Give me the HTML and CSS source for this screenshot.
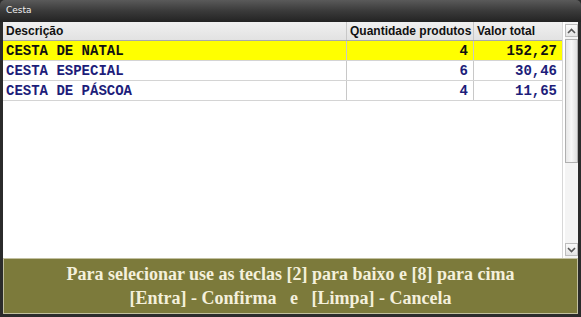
FILE: index.html
```html
<!DOCTYPE html>
<html>
<head>
<meta charset="utf-8">
<link rel="stylesheet" href="styles.css">
</head>
<body>
<div class="window">
  <div class="titlebar">Cesta</div>
  <div class="content">
    <div class="grid">
      <div class="row head">
        <div class="c desc">Descrição</div>
        <div class="c qty">Quantidade produtos</div>
        <div class="c val">Valor total</div>
      </div>
      <div class="row data sel">
        <div class="c desc">CESTA DE NATAL</div>
        <div class="c qty num">4</div>
        <div class="c val num">152,27</div>
      </div>
      <div class="row data">
        <div class="c desc">CESTA ESPECIAL</div>
        <div class="c qty num">6</div>
        <div class="c val num">30,46</div>
      </div>
      <div class="row data">
        <div class="c desc">CESTA DE PÁSCOA</div>
        <div class="c qty num">4</div>
        <div class="c val num">11,65</div>
      </div>
    </div>
    <div class="scrollbar">
      <div class="sbtn up"><svg width="9" height="6" viewBox="0 0 9 6"><path d="M1 5 L4.5 1.5 L8 5" fill="none" stroke="#555" stroke-width="1.6"/></svg></div>
      <div class="thumb"></div>
      <div class="track"></div>
      <div class="sbtn down"><svg width="9" height="6" viewBox="0 0 9 6"><path d="M1 1 L4.5 4.5 L8 1" fill="none" stroke="#555" stroke-width="1.6"/></svg></div>
    </div>
  </div>
  <div class="footer">
    <div>Para selecionar use as teclas [2] para baixo e [8] para cima</div>
    <div>[Entra] - Confirma &nbsp; e &nbsp; [Limpa] - Cancela</div>
  </div>
</div>
</body>
</html>
```

FILE: styles.css
```css
html, body {
  margin: 0;
  padding: 0;
  background: #2a2a2a;
}
.window {
  width: 581px;
  height: 317px;
  display: flex;
  flex-direction: column;
  background: #2b2b2b;
  border-radius: 5px 5px 0 0;
  overflow: hidden;
}
.titlebar {
  height: 22px;
  box-sizing: border-box;
  padding: 5px 0 0 6px;
  background: linear-gradient(#5a5a5a, #3a3a3a 50%, #232323);
  color: #f0f0f0;
  font: 9px "DejaVu Sans", sans-serif;
}
.content {
  display: flex;
  height: 236px;
  margin: 0 3px 0 3px;
  background: #fff;
}
.grid {
  flex: 1;
  border-right: 1px solid #d8d8d8;
}
.row {
  display: flex;
  height: 20px;
  box-sizing: border-box;
  border-bottom: 1px solid #d4d4d4;
}
.row.head {
  height: 19px;
  background: linear-gradient(#f0f0f0, #e2e2e2);
  border-bottom: 1px solid #a8a8a8;
  font: bold 12px "Liberation Sans", Arial, sans-serif;
  color: #111;
}
.c {
  box-sizing: border-box;
  padding: 0 3px;
  display: flex;
  align-items: center;
  white-space: nowrap;
}
.desc { width: 344px; border-right: 1px solid #c8c8c8; }
.qty { width: 127px; border-right: 1px solid #c8c8c8; }
.val { width: 88px; }
.head .c { padding: 0 2px 0 3px; }
.num { justify-content: flex-end; }
.data {
  font: bold 14px "Liberation Mono", "Courier New", monospace;
  color: #1d1d7a;
}
.data .c { padding: 0 3px 0 3px; }
.data .num { padding-right: 5px; }
.sel {
  background: #ffff00;
  color: #111;
}
.scrollbar {
  width: 14px;
  margin-left: 2px;
  display: flex;
  flex-direction: column;
  background: #f4f4f4;
  padding: 2px 0;
  box-sizing: border-box;
}
.sbtn {
  height: 13px;
  display: flex;
  align-items: center;
  justify-content: center;
  border: 1px solid #bdbdbd;
  background: linear-gradient(#fafafa, #e4e4e4);
  box-sizing: border-box;
}
.thumb {
  height: 124px;
  margin-top: 2px;
  border: 1px solid #b0b0b0;
  background: linear-gradient(90deg, #e8e8e8, #f8f8f8 50%, #e0e0e0);
  box-sizing: border-box;
}
.track { flex: 1; }
.footer {
  flex: 1;
  margin: 0 3px 3px 3px;
  background: #7c7a3b;
  border: 1px solid #c2c0a0;
  color: #f4f0dc;
  font: bold 18px "Liberation Serif", "Times New Roman", serif;
  text-align: center;
  display: flex;
  flex-direction: column;
  justify-content: center;
  line-height: 24px;
}
```
